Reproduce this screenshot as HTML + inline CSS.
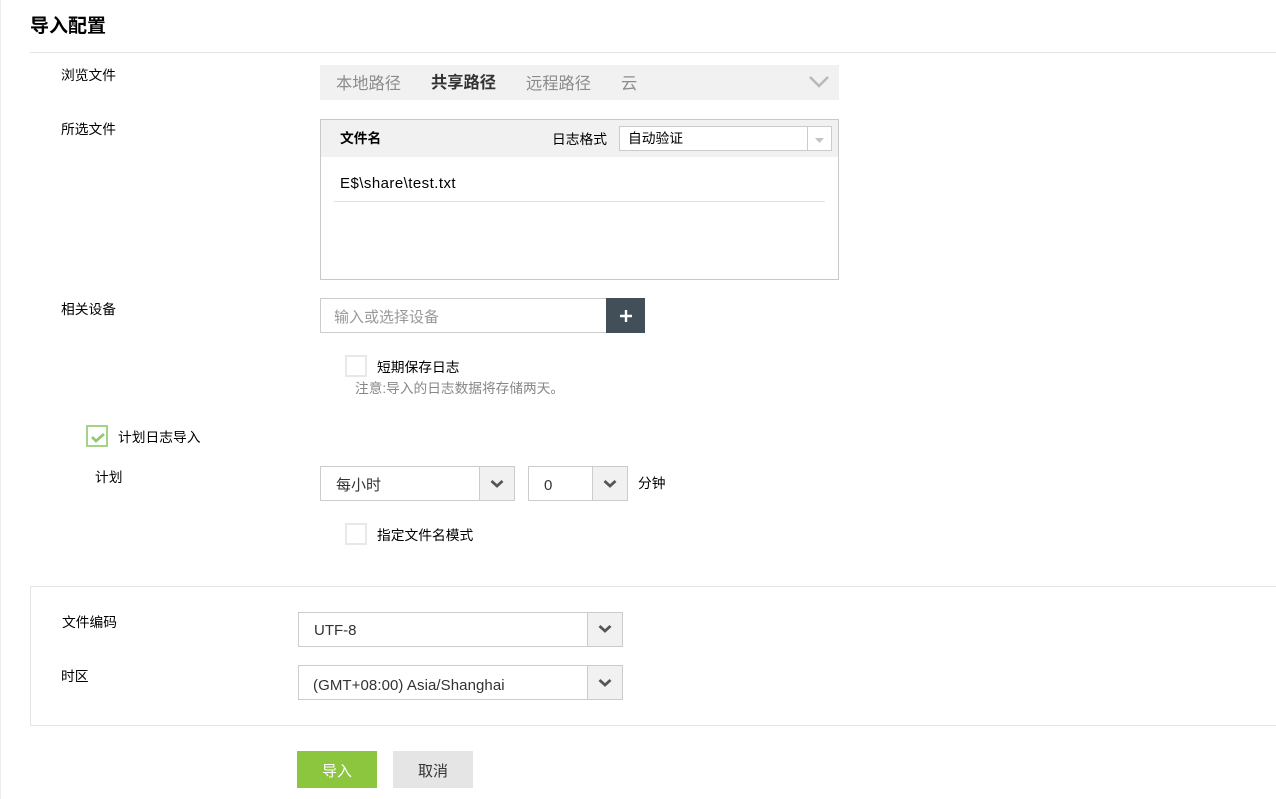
<!DOCTYPE html>
<html lang="zh">
<head>
<meta charset="utf-8">
<style>
html,body{margin:0;padding:0;background:#fff}
body{width:1276px;height:799px;position:relative;overflow:hidden;font-family:"Liberation Sans","Noto Sans CJK SC",sans-serif;color:#000}
.a{position:absolute;box-sizing:border-box}
.t{position:absolute;white-space:nowrap;line-height:20px;font-size:13.75px}
.g{color:#8c8c8c;font-size:16.25px}
.l{font-size:15px;color:#333}
.sel{position:absolute;box-sizing:border-box;background:#fff;border:1px solid #ccc}
.arr{position:absolute;top:0;bottom:0;right:0;background:#f1f1f1;border-left:1px solid #ccc;box-sizing:border-box}
.arr svg{position:absolute;left:50%;top:50%;margin-left:-7px;margin-top:-5px}
.chk{position:absolute;box-sizing:border-box;width:22px;height:22px;border:2px solid #e8e8e8;background:#fff}
</style>
</head>
<body>
<div class="a" style="left:0;top:0;width:1px;height:799px;background:#eee"></div>
<div class="t" style="left:30px;top:17px;font-size:19px;font-weight:bold">导入配置</div>
<div class="a" style="left:30px;top:52px;width:1246px;height:1px;background:#e4e4e4"></div>

<div class="t" style="left:61px;top:66px">浏览文件</div>
<div class="a" style="left:320px;top:65px;width:519px;height:35px;background:#f1f1f1"></div>
<div class="t g" style="left:336px;top:74px">本地路径</div>
<div class="t" style="left:431px;top:73px;font-size:16.25px;font-weight:bold;color:#333">共享路径</div>
<div class="t g" style="left:526px;top:74px">远程路径</div>
<div class="t g" style="left:621px;top:74px">云</div>
<svg class="a" style="left:808px;top:75px" width="22" height="14" viewBox="0 0 22 14"><path d="M2 2 L11 11 L20 2" fill="none" stroke="#b8b8b8" stroke-width="2.5"/></svg>

<div class="t" style="left:61px;top:120px">所选文件</div>
<div class="a" style="left:320px;top:119px;width:519px;height:161px;border:1px solid #c8c8c8;background:#fff"></div>
<div class="a" style="left:321px;top:120px;width:517px;height:37px;background:#f1f1f1"></div>
<div class="t" style="left:340px;top:129px;font-weight:bold">文件名</div>
<div class="t" style="left:552px;top:130px">日志格式</div>
<div class="sel" style="left:619px;top:126px;width:213px;height:25px"></div>
<div class="a" style="left:807px;top:127px;width:1px;height:23px;background:#ccc"></div>
<svg class="a" style="left:814px;top:137px" width="11" height="7" viewBox="0 0 11 7"><path d="M1 1 H10 L5.5 6 Z" fill="#c4c4c4"/></svg>
<div class="t" style="left:628px;top:129px">自动验证</div>
<div class="t" style="left:340px;top:174px;font-size:15px;letter-spacing:.45px">E$\share\test.txt</div>
<div class="a" style="left:334px;top:201px;width:491px;height:1px;background:#e2e2e2"></div>

<div class="t" style="left:61px;top:300px">相关设备</div>
<div class="a" style="left:320px;top:298px;width:287px;height:35px;border:1px solid #ccc;background:#fff"></div>
<div class="t" style="left:334px;top:308px;font-size:15px;color:#999">输入或选择设备</div>
<div class="a" style="left:606px;top:298px;width:39px;height:35px;background:#434f58"></div>
<svg class="a" style="left:619px;top:309px" width="14" height="14" viewBox="0 0 14 14"><path d="M7 1 V13 M1 7 H13" stroke="#fff" stroke-width="2.4" fill="none"/></svg>

<div class="chk" style="left:345px;top:355px"></div>
<div class="t" style="left:377px;top:358px">短期保存日志</div>
<div class="t" style="left:355px;top:379px;color:#888;font-size:13.7px">注意:导入的日志数据将存储两天。</div>

<div class="chk" style="left:86px;top:425px;border-color:#a3d487"></div>
<svg class="a" style="left:90px;top:431px" width="16" height="13" viewBox="0 0 16 13"><path d="M2 6 L6 10 L14 3" fill="none" stroke="#90c976" stroke-width="2.8"/></svg>
<div class="t" style="left:118px;top:428px">计划日志导入</div>

<div class="t" style="left:95px;top:468px">计划</div>
<div class="sel" style="left:320px;top:466px;width:195px;height:35px"><div class="arr" style="width:35px"><svg width="14" height="10" viewBox="0 0 14 10"><path d="M1.5 2 L7 7 L12.5 2" fill="none" stroke="#555" stroke-width="2.8"/></svg></div></div>
<div class="t l" style="left:336px;top:476px">每小时</div>
<div class="sel" style="left:528px;top:466px;width:100px;height:35px"><div class="arr" style="width:35px"><svg width="14" height="10" viewBox="0 0 14 10"><path d="M1.5 2 L7 7 L12.5 2" fill="none" stroke="#555" stroke-width="2.8"/></svg></div></div>
<div class="t l" style="left:544px;top:476px">0</div>
<div class="t" style="left:638px;top:474px">分钟</div>

<div class="chk" style="left:345px;top:523px"></div>
<div class="t" style="left:377px;top:526px">指定文件名模式</div>

<div class="a" style="left:30px;top:586px;width:1260px;height:140px;border:1px solid #e4e4e4;background:#fff"></div>
<div class="t" style="left:62px;top:613px">文件编码</div>
<div class="sel" style="left:298px;top:612px;width:325px;height:35px"><div class="arr" style="width:35px"><svg style="margin-top:-6px" width="14" height="10" viewBox="0 0 14 10"><path d="M1.5 2 L7 7 L12.5 2" fill="none" stroke="#555" stroke-width="2.8"/></svg></div></div>
<div class="t l" style="left:314px;top:621px">UTF-8</div>
<div class="t" style="left:61px;top:667px">时区</div>
<div class="sel" style="left:298px;top:665px;width:325px;height:35px"><div class="arr" style="width:35px"><svg width="14" height="10" viewBox="0 0 14 10"><path d="M1.5 2 L7 7 L12.5 2" fill="none" stroke="#555" stroke-width="2.8"/></svg></div></div>
<div class="t l" style="left:313px;top:676px;letter-spacing:.08px">(GMT+08:00) Asia/Shanghai</div>

<div class="a" style="left:297px;top:751px;width:80px;height:37px;background:#8cc63f"></div>
<div class="t" style="left:297px;top:762px;width:80px;text-align:center;font-size:15px;color:#fff">导入</div>
<div class="a" style="left:393px;top:751px;width:80px;height:37px;background:#e5e5e5"></div>
<div class="t" style="left:393px;top:762px;width:80px;text-align:center;font-size:15px;color:#333">取消</div>
</body>
</html>
